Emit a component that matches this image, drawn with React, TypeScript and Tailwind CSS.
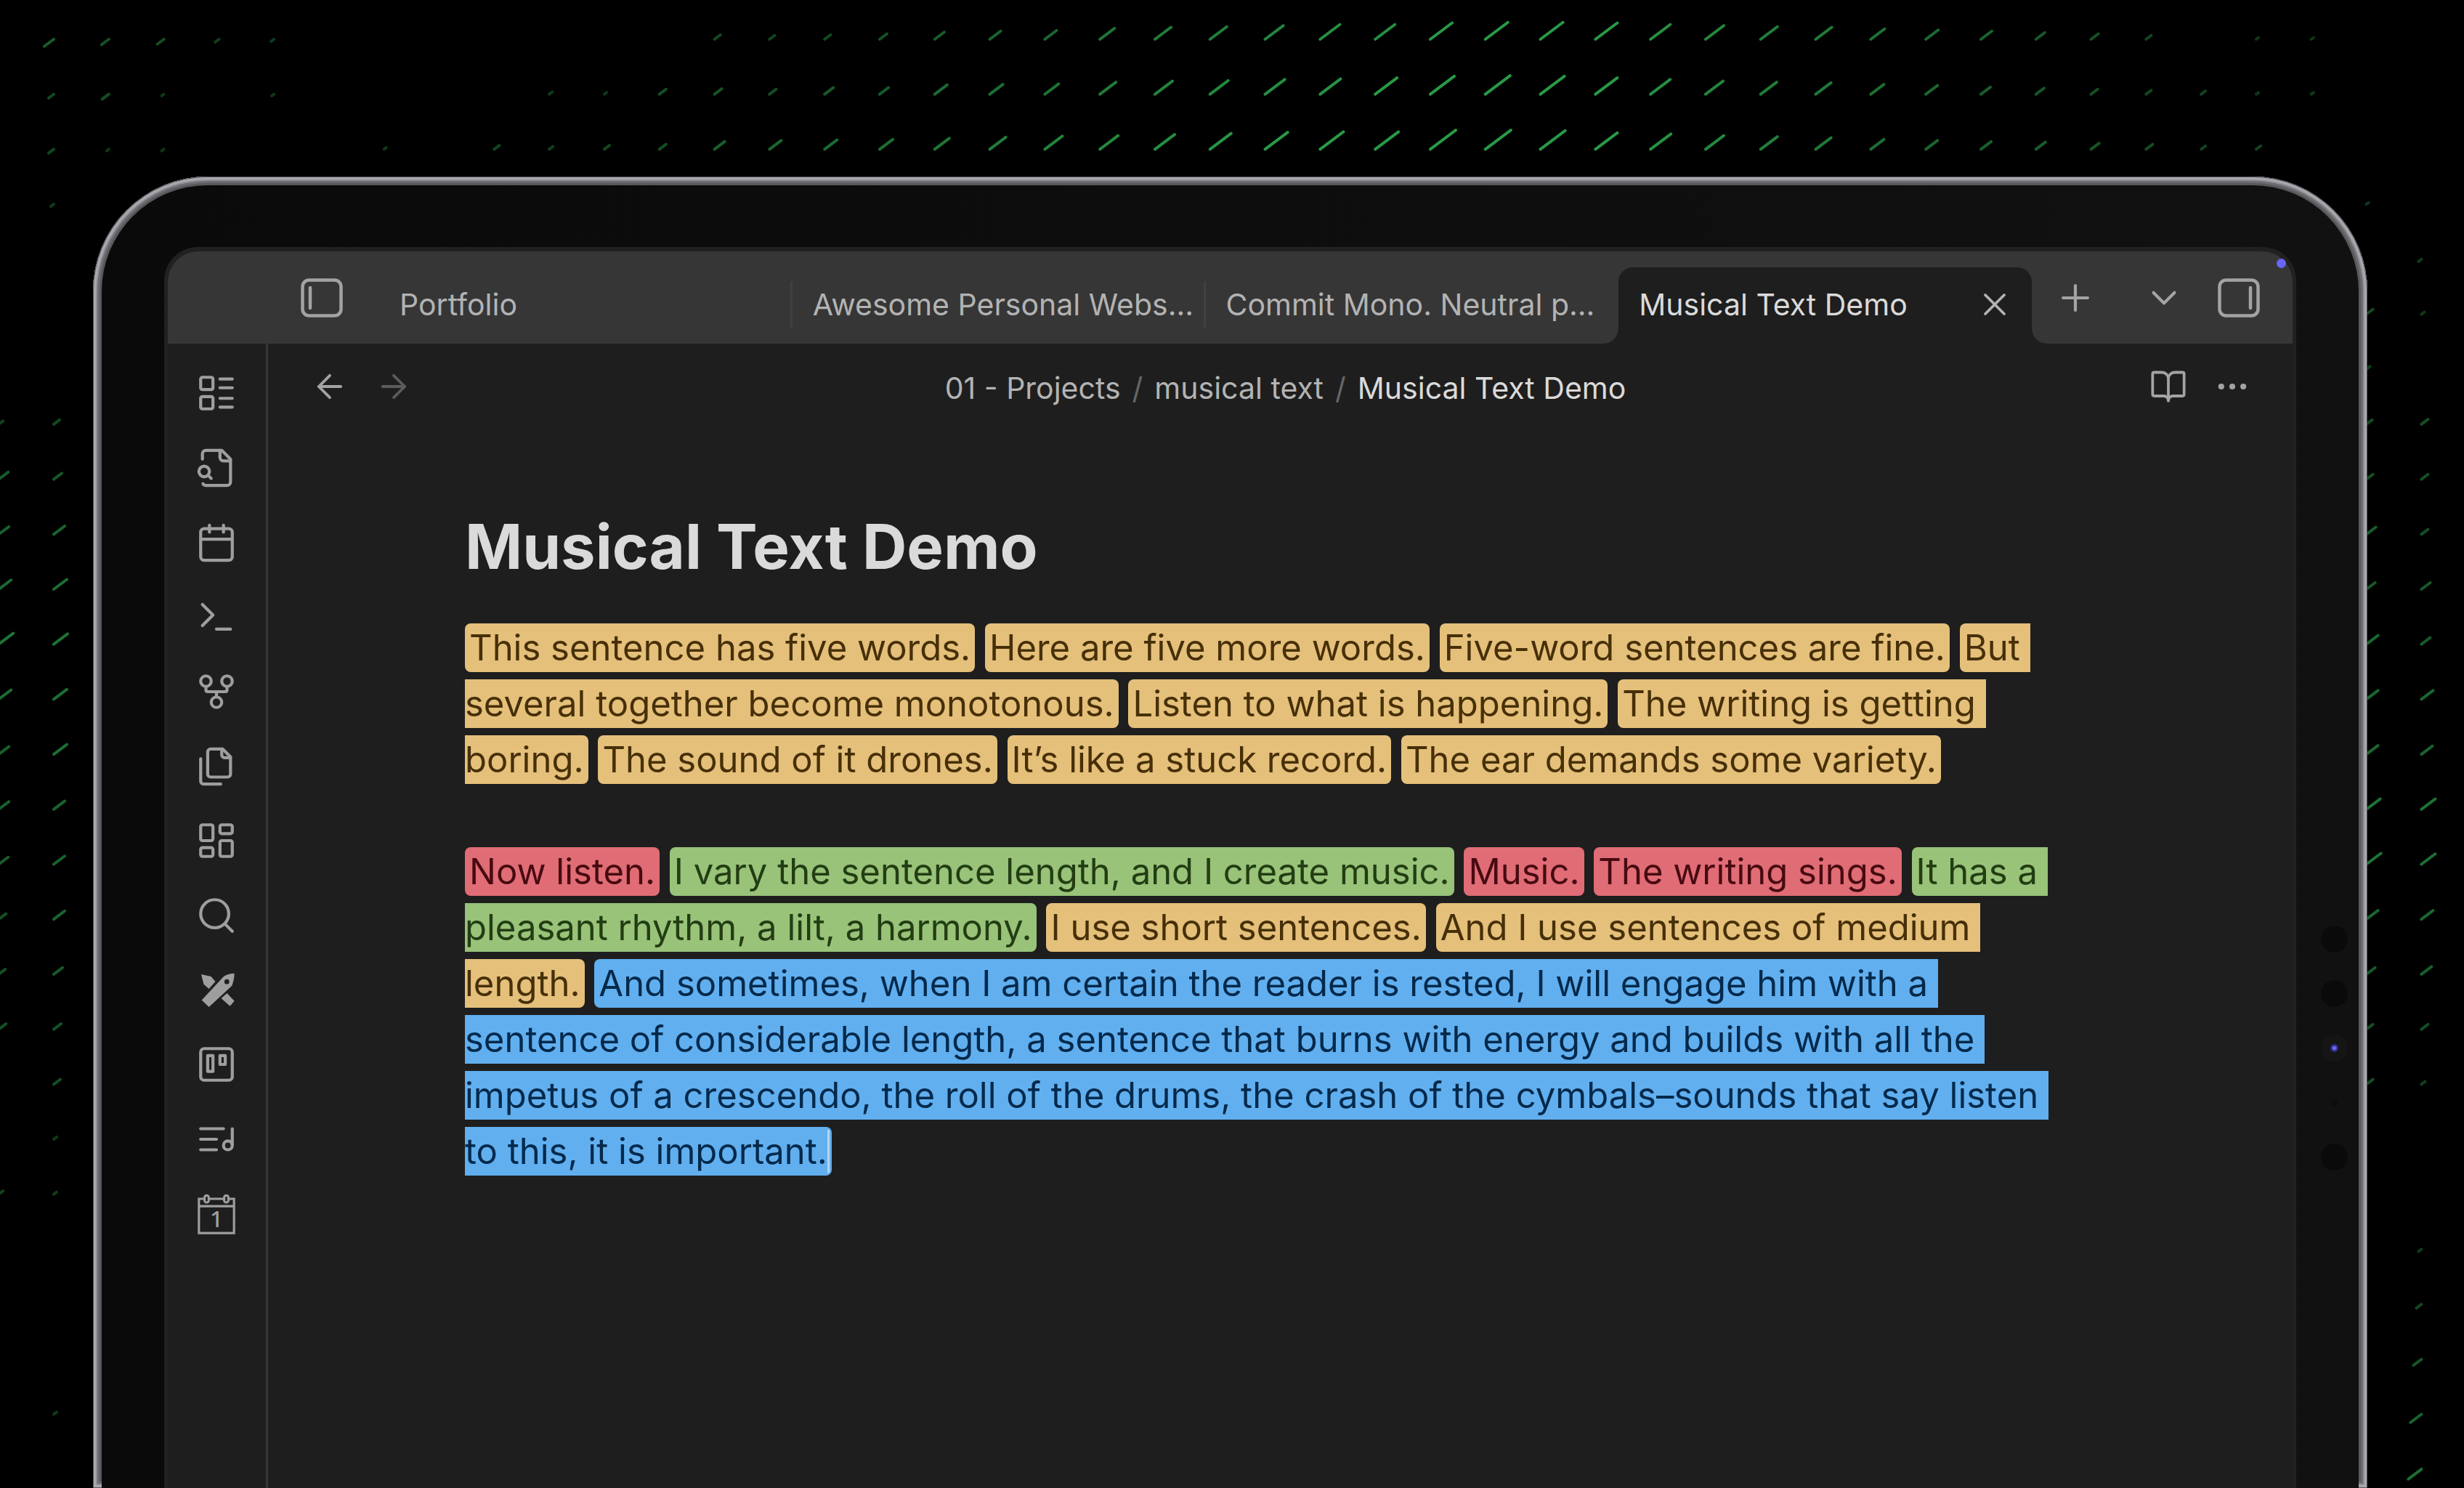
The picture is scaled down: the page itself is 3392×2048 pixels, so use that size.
import React from "react";
import { ArrowLeft, ArrowRight, BookOpen, ChevronDown, MoreHorizontal, Plus, X } from "lucide-react";

/* ---------- background field of green strokes ---------- */

// [row, first column, stroke lengths]; negative strokes point down and to the left
const FIELD: [number, number, number[]][] = [
  [0, 1, [-13, -10, -9, -5, -4]],
  [0, 13, [8, 7, 8, 10, 13, 15, 16, 20, 22, 23, 25, 27, 27, 30, 31, 31, 30, 27, 25, 23, 22, 19, 17, 15, 12, 10, 7, 0, 3, 3]],
  [1, 1, [-7, -9, -3, 0, -3, 0, 0, 0, 0, 4, 3, 9, 10, 9, 12, 12, 17, 18, 19, 22, 24, 25, 27, 28, 30, 33, 34, 33, 30, 27, 24, 22, 21, 18, 16, 13, 11, 9, 7, 6, 3, 3]],
  [2, 1, [-7, -3, -3, 0, 0, 0, 3, 0, 7, 5, 7, 9, 14, 16, 17, 18, 20, 22, 24, 25, 27, 29, 31, 32, 32, 35, 35, 34, 30, 28, 25, 23, 21, 18, 16, 14, 13, 11, 9, 6, 6]],
  [3, 1, [-4]],
  [3, 43, [3]],
  [4, 44, [-4]],
  [5, 43, [9, 4]],
  [6, 43, [5]],
  [7, 0, [6, 8]],
  [8, 0, [13, 11]],
  [9, 0, [14, 15]],
  [10, 0, [17, 18]],
  [11, 0, [20, 19]],
  [12, 0, [17, 18]],
  [13, 0, [14, 18]],
  [14, 0, [14, 15]],
  [15, 0, [13, 15]],
  [16, 0, [10, 15]],
  [17, 0, [9, 12]],
  [18, 0, [10, 10]],
  [19, 1, [9]],
  [20, 1, [4]],
  [21, 0, [6, 4]],
  [25, 1, [4]],
  [7, 43, [8, 9]],
  [8, 43, [9, 9]],
  [9, 43, [13, 9]],
  [10, 43, [12, 12]],
  [11, 43, [16, 12]],
  [12, 43, [16, 16]],
  [13, 43, [16, 15]],
  [14, 43, [19, 19]],
  [15, 43, [20, 19]],
  [16, 43, [16, 16]],
  [17, 43, [12, 14]],
  [18, 43, [9, 9]],
  [19, 43, [9, 5]],
  [22, 44, [-4]],
  [23, 44, [-7]],
  [24, 44, [-11]],
  [25, 44, [-15]],
  [26, 44, [-18]],
];

function StrokeField() {
  return (
    <svg
      className="absolute inset-0 h-full w-full"
      viewBox="0 0 3392 2048"
      preserveAspectRatio="xMidYMin slice"
      aria-hidden="true"
    >
      {FIELD.flatMap(([row, first, lengths]) =>
        lengths.map((len, i) => {
          if (len === 0) return null;
          const x = 74 + 75.8 * (first + i - 1);
          const y = 54 + 75.7 * row;
          return (
            <line
              key={`${row}-${first + i}`}
              x1={x}
              y1={y}
              x2={x + len}
              y2={y - len * 0.75}
              stroke="#2fb454"
              strokeWidth={4}
              strokeLinecap="round"
              opacity={Math.min(0.85, 0.25 + Math.abs(len) / 50)}
            />
          );
        }),
      )}
    </svg>
  );
}

/* ---------- icons ---------- */

function RibbonIcon({ children }: { children: React.ReactNode }) {
  return (
    <svg
      className="size-[58px]"
      viewBox="0 0 24 24"
      fill="none"
      stroke="currentColor"
      strokeWidth={1.75}
      strokeLinecap="round"
      strokeLinejoin="round"
      aria-hidden="true"
    >
      {children}
    </svg>
  );
}

function SidebarIcon({ side }: { side: "left" | "right" }) {
  const x = side === "left" ? 13 : 45;
  return (
    <svg className="h-[54px] w-[58px]" viewBox="0 0 58 54" fill="none" stroke="currentColor" strokeLinecap="round" aria-hidden="true">
      <rect x="2.5" y="2.5" width="53" height="49" rx="9" strokeWidth="4.5" />
      <path d={`M${x} 13V41`} strokeWidth="4.5" />
    </svg>
  );
}

const RIBBON: { label: string; icon: React.ReactNode }[] = [
  {
    label: "Outline cards",
    icon: (
      <>
        <rect x="3" y="14" width="7" height="7" rx="1" />
        <rect x="3" y="3" width="7" height="7" rx="1" />
        <path d="M14 4h7M14 9h7M14 15h7M14 20h7" />
      </>
    ),
  },
  {
    label: "Quick switcher",
    icon: (
      <>
        <path d="M4.3 21a2 2 0 0 0 1.7 1h12a2 2 0 0 0 2-2V7l-5-5H6a2 2 0 0 0-2 2v3" />
        <path d="M14 2v4a2 2 0 0 0 2 2h4" />
        <circle cx="5" cy="14" r="3" />
        <path d="m9 18-1.5-1.5" />
      </>
    ),
  },
  {
    label: "Daily note",
    icon: (
      <>
        <rect x="3" y="4" width="18" height="18" rx="2" />
        <path d="M16 2v4M8 2v4M3 10h18" />
      </>
    ),
  },
  { label: "Command palette", icon: <path d="m4 17 6-6-6-6M12 19h8" /> },
  {
    label: "Graph view",
    icon: (
      <>
        <circle cx="12" cy="18" r="3" />
        <circle cx="6" cy="6" r="3" />
        <circle cx="18" cy="6" r="3" />
        <path d="M18 9v2c0 .6-.4 1-1 1H7c-.6 0-1-.4-1-1V9M12 12v3" />
      </>
    ),
  },
  {
    label: "Templates",
    icon: (
      <>
        <path d="M15.5 2H8.6c-.4 0-.8.2-1.1.5-.3.3-.5.7-.5 1.1v12.8c0 .4.2.8.5 1.1.3.3.7.5 1.1.5h9.8c.4 0 .8-.2 1.1-.5.3-.3.5-.7.5-1.1V6.5L15.5 2z" />
        <path d="M3 7.6v12.8c0 .4.2.8.5 1.1.3.3.7.5 1.1.5h9.8" />
        <path d="M15 2v3.4c0 .4.2.8.5 1.1.3.3.7.5 1.1.5H20" />
      </>
    ),
  },
  {
    label: "Canvas",
    icon: (
      <>
        <rect x="3" y="3" width="7" height="9" rx="1" />
        <rect x="14" y="3" width="7" height="5" rx="1" />
        <rect x="14" y="12" width="7" height="9" rx="1" />
        <rect x="3" y="16" width="7" height="5" rx="1" />
      </>
    ),
  },
  {
    label: "Search",
    icon: (
      <>
        <circle cx="11" cy="11" r="8" />
        <path d="m21 21-4.3-4.3" />
      </>
    ),
  },
  {
    label: "New drawing",
    icon: (
      <g fill="currentColor" stroke="none">
        <path
          fillRule="evenodd"
          d="M22.2 2.4c-2 .1-4.200.5-6 1.600L3.600 17.600l4.100 3.900L20.800 9.400c.9-2.300 1.400-4.700 1.400-7zM17.900 5.700a1.400 1.400 0 1 1 0 2.800 1.400 1.400 0 0 1 0-2.800z"
        />
        <path d="M3.300 2.900l5.600 1.200 2.500 2.900-3.700 4.200-3-2.700z" />
        <path d="M18 13.700l4.200 4.400-2.500 2.900-5-4.400z" />
      </g>
    ),
  },
  {
    label: "Kanban board",
    icon: (
      <>
        <rect x="3" y="3" width="18" height="18" rx="2" />
        <rect x="7" y="7" width="3" height="9" />
        <rect x="14" y="7" width="3" height="5" />
      </>
    ),
  },
  {
    label: "Musical text",
    icon: (
      <>
        <path d="M21 15V6M12 12H3M16 6H3M12 18H3" />
        <circle cx="18.500" cy="15.500" r="2.500" />
      </>
    ),
  },
  {
    label: "Today",
    icon: (
      <>
        <g strokeWidth="1.300" strokeLinecap="butt" strokeLinejoin="miter">
          <path d="M5 3.300H2v19.500h20V3.300h-3M7.700 3.300h8.600M2 7.500h20" />
          <rect x="5.200" y="1.400" width="2.400" height="4" rx="1.200" />
          <rect x="16.400" y="1.400" width="2.400" height="4" rx="1.200" />
        </g>
        <text
          x="12"
          y="19.300"
          textAnchor="middle"
          fontFamily="Noto Sans, sans-serif"
          fontSize="13"
          fontWeight="500"
          fill="currentColor"
          stroke="none"
        >
          1
        </text>
      </>
    ),
  },
];

/* ---------- note text ---------- */

type Tone = "amber" | "red" | "green" | "blue";

const TONES: Record<Tone, string> = {
  amber: "bg-[#e5c07b] text-[#473008]",
  red: "bg-[#e06c75] text-[#470a10]",
  green: "bg-[#98c379] text-[#233d13]",
  blue: "bg-[#61afef] text-[#03294b]",
};

function Sentence({ tone, children, caret }: { tone: Tone; children: string; caret?: boolean }) {
  return (
    <mark className={`rounded-lg px-1.5 py-1 ${TONES[tone]}`}>
      {children}
      {caret && <span className="-mr-[3px] border-r-[3px] border-[#b9d3ea]" />}
    </mark>
  );
}

const FIRST: [Tone, string][] = [
  ["amber", "This sentence has five words."],
  ["amber", "Here are five more words."],
  ["amber", "Five-word sentences are fine."],
  ["amber", "But \nseveral together become monotonous."],
  ["amber", "Listen to what is happening."],
  ["amber", "The writing is getting \nboring."],
  ["amber", "The sound of it drones."],
  ["amber", "It’s like a stuck record."],
  ["amber", "The ear demands some variety."],
];

const SECOND: [Tone, string][] = [
  ["red", "Now listen."],
  ["green", "I vary the sentence length, and I create music."],
  ["red", "Music."],
  ["red", "The writing sings."],
  ["green", "It has a \npleasant rhythm, a lilt, a harmony."],
  ["amber", "I use short sentences."],
  ["amber", "And I use sentences of medium \nlength."],
  [
    "blue",
    "And sometimes, when I am certain the reader is rested, I will engage him with a \nsentence of considerable length, a sentence that burns with energy and builds with all the \nimpetus of a crescendo, the roll of the drums, the crash of the cymbals–sounds that say listen \nto this, it is important.",
  ],
];

function Paragraph({ sentences, caret }: { sentences: [Tone, string][]; caret?: boolean }) {
  return (
    <p className="whitespace-pre">
      {sentences.map(([tone, text], i) => (
        <React.Fragment key={i}>
          {i > 0 && <span> </span>}
          <Sentence tone={tone} caret={caret && i === sentences.length - 1}>
            {text}
          </Sentence>
        </React.Fragment>
      ))}
    </p>
  );
}

/* ---------- window ---------- */

const TABS = ["Portfolio", "Awesome Personal Webs...", "Commit Mono. Neutral p..."];

function TabBar() {
  return (
    <header className="relative flex h-[127px] items-center rounded-t-[42px] bg-[#363636] text-[#a3a3a3]">
      <button aria-label="Toggle left sidebar" className="mr-[50px] ml-[183px]">
        <SidebarIcon side="left" />
      </button>
      <div role="tablist" className="grid min-w-0 flex-1 grid-cols-4 self-end">
        {TABS.map((tab, i) => (
          <button
            key={tab}
            role="tab"
            aria-selected={false}
            className="flex h-[105px] min-w-0 items-center pb-1 text-left text-[#b3b3b3]"
          >
            <span className="flex-1 overflow-hidden pl-7 whitespace-nowrap">{tab}</span>
            <span className={i < 2 ? "h-16 w-[3px] bg-[#404040]" : "w-[3px]"} />
          </button>
        ))}
        <div className="relative flex h-[105px] min-w-0 items-center rounded-t-[20px] bg-[#1e1e1e] pr-[25px] pb-1 pl-7">
          <span className="absolute bottom-0 -left-5 size-5 bg-[radial-gradient(circle_at_top_left,transparent_19px,#1e1e1e_20px)]" />
          <span className="absolute -right-5 bottom-0 size-5 bg-[radial-gradient(circle_at_top_right,transparent_19px,#1e1e1e_20px)]" />
          <button role="tab" aria-selected={true} className="flex-1 text-left whitespace-nowrap text-[#dadada]">
            Musical Text Demo
          </button>
          <button aria-label="Close tab" className="text-[#b3b3b3]">
            <X className="size-[52px]" strokeWidth={1.75} />
          </button>
        </div>
      </div>
      <button aria-label="New tab" className="ml-[31px]">
        <Plus className="size-[58px]" strokeWidth={1.75} />
      </button>
      <button aria-label="Tab list" className="ml-16">
        <ChevronDown className="size-[58px]" strokeWidth={1.75} />
      </button>
      <button aria-label="Toggle right sidebar" className="mx-[45px]">
        <SidebarIcon side="right" />
      </button>
      <span className="absolute top-[10px] right-[9px] size-[13px] rounded-full bg-[#6a65f5]" />
    </header>
  );
}

function Ribbon() {
  return (
    <nav aria-label="Ribbon" className="w-[138px] shrink-0 border-r-[3px] border-[#363636] pt-[17px] pr-[2px] text-[#9e9e9e]">
      <div className="grid h-[1232px] grid-rows-12">
        {RIBBON.map((item) => (
          <button key={item.label} aria-label={item.label} className="grid place-items-center">
            <RibbonIcon>{item.icon}</RibbonIcon>
          </button>
        ))}
      </div>
    </nav>
  );
}

function ViewHeader() {
  return (
    <div className="flex h-[118px] items-center pr-[57px] pl-[59px] text-[41px] leading-[50px] text-[#a3a3a3]">
      <button aria-label="Back">
        <ArrowLeft className="size-[52px]" strokeWidth={1.75} />
      </button>
      <button aria-label="Forward" className="ml-9 text-[#5c5c5c]">
        <ArrowRight className="size-[52px]" strokeWidth={1.75} />
      </button>
      <div className="flex flex-1 justify-center gap-4 pt-1 pl-3 whitespace-nowrap text-[#b3b3b3]">
        <a href="#projects">01 - Projects</a>
        <span className="text-[#666666]">/</span>
        <a href="#musical-text">musical text</a>
        <span className="text-[#666666]">/</span>
        <span className="text-[#dadada]">Musical Text Demo</span>
      </div>
      <button aria-label="Reading view">
        <BookOpen className="size-[52px]" strokeWidth={1.75} />
      </button>
      <button aria-label="More options" className="ml-9">
        <MoreHorizontal className="size-[52px]" strokeWidth={1.75} />
      </button>
    </div>
  );
}

function FrontCamera() {
  return (
    <div className="absolute top-[1031px] right-[27px] flex flex-col items-center gap-[38px]">
      <span className="size-[37px] rounded-full bg-[#0a0a0a]" />
      <span className="size-[37px] rounded-full bg-[#0a0a0a]" />
      <span className="grid size-[37px] place-items-center rounded-full bg-[#151516]">
        <span className="size-[11px] rounded-full bg-[radial-gradient(circle,#7d7df5_10%,#2d2d9c_50%,#1b1b30_100%)]" />
      </span>
      <span className="grid size-[37px] place-items-center">
        <span className="size-2 rounded-full bg-[#0c0c0c]" />
      </span>
      <span className="size-[37px] rounded-full bg-[#0a0a0a]" />
    </div>
  );
}

export default function App() {
  return (
    <div className="relative flex h-screen flex-col overflow-hidden bg-black pt-[243px] pr-[133px] pl-[128px] font-['Inter',sans-serif] text-[41px] leading-[50px]">
      <StrokeField />
      <div className="relative flex flex-1 flex-col rounded-t-[158px] bg-[#5a5a5e] shadow-[inset_0_0_0_1px_#55555a,inset_0_0_0_4px_#a9a9af,inset_0_0_0_6px_#909095,inset_0_0_0_9px_#6c6c71,inset_0_0_0_11px_#58585c] px-3 pt-3">
        <div className="flex flex-1 flex-col rounded-t-[146px] bg-linear-to-r from-[#0a0a0a] to-[#111111] px-[86px] pt-[85px]">
          <div className="flex flex-1 flex-col rounded-t-[46px] bg-[#212121] px-[5px] pt-[6px]">
            <TabBar />
            <div className="flex flex-1 bg-[#1e1e1e]">
              <Ribbon />
              <main className="min-w-0 flex-1">
                <ViewHeader />
                <article className="pt-[102px] pl-[271px] text-[49px] leading-[77px]">
                  <h1 className="mb-10 text-[85px] leading-[120px] font-bold whitespace-nowrap text-[#dadada]">
                    Musical Text Demo
                  </h1>
                  <Paragraph sentences={FIRST} />
                  <div className="mt-[77px]">
                    <Paragraph sentences={SECOND} caret />
                  </div>
                </article>
              </main>
            </div>
          </div>
        </div>
        <FrontCamera />
      </div>
    </div>
  );
}
